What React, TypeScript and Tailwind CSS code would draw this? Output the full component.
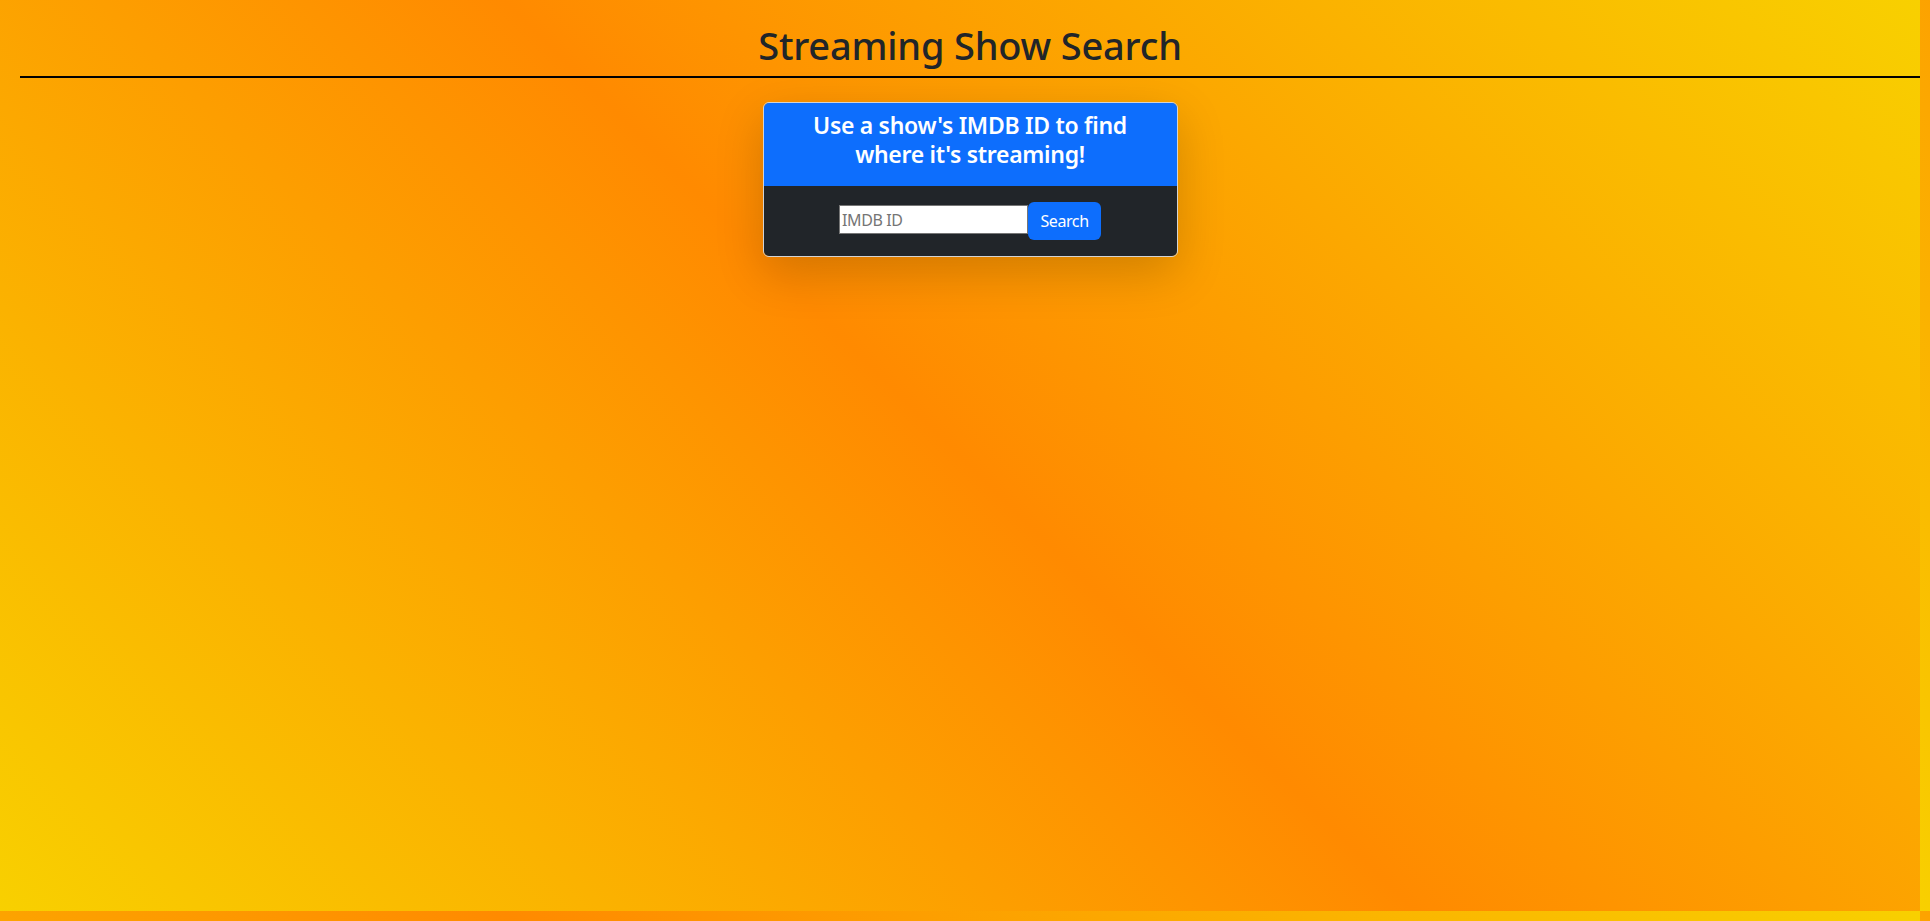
import { useState } from "react"

// the page's gradient, tiled at the size of the main box so the seam at the edges shows
const bg =
  "bg-[linear-gradient(45deg,#f8d000_0%,#ff8a00_50%,#f8d000_100%)] bg-[length:1920px_911px] bg-repeat bg-left-top"

export default function App() {
  const [imdbId, setImdbId] = useState("")

  return (
    <div className={`w-full h-[921px] overflow-hidden ${bg}`} style={{ fontFamily: '"Noto Sans", "Open Sans", sans-serif' }}>
      <div className="w-[1920px] h-[911px] pl-[20px]">
        <h1 className="pt-[21px] mb-[7px] text-center text-[38px] leading-[48px] font-medium tracking-[-0.2px] text-[#212529]">
          Streaming Show Search
        </h1>

        <hr className="border-0 h-[2px] bg-black" />

        <div className="flex justify-center mt-[24px]">
          <div className="w-[415px] border border-[#d3d3d3] rounded-[6px] overflow-hidden shadow-[0_1rem_3rem_rgba(0,0,0,0.175)]">
            <div className="bg-[#0d6efd] pt-[8px] pb-[17px] px-4 text-center">
              <h4 className="text-[23px] leading-[29px] font-semibold tracking-[-0.3px] text-white">
                Use a show's IMDB ID to find
                <br />
                where it's streaming!
              </h4>
            </div>

            <div className="bg-[#212529] h-[70px] flex items-center justify-center">
              <form
                className="flex items-center"
                onSubmit={(e) => e.preventDefault()}
              >
                <input
                  type="text"
                  value={imdbId}
                  onChange={(e) => setImdbId(e.target.value)}
                  placeholder="IMDB ID"
                  className="w-[189px] h-[29px] -mt-[3px] px-[2px] bg-white border border-[#767676] text-[16px] tracking-[-0.4px] text-[#212529] placeholder:text-[#757575] outline-none"
                />
                <button
                  type="submit"
                  className="h-[38px] w-[73px] rounded-[6px] bg-[#0d6efd] text-white text-[16px] tracking-[-0.4px]"
                >
                  Search
                </button>
              </form>
            </div>
          </div>
        </div>
      </div>
    </div>
  )
}
